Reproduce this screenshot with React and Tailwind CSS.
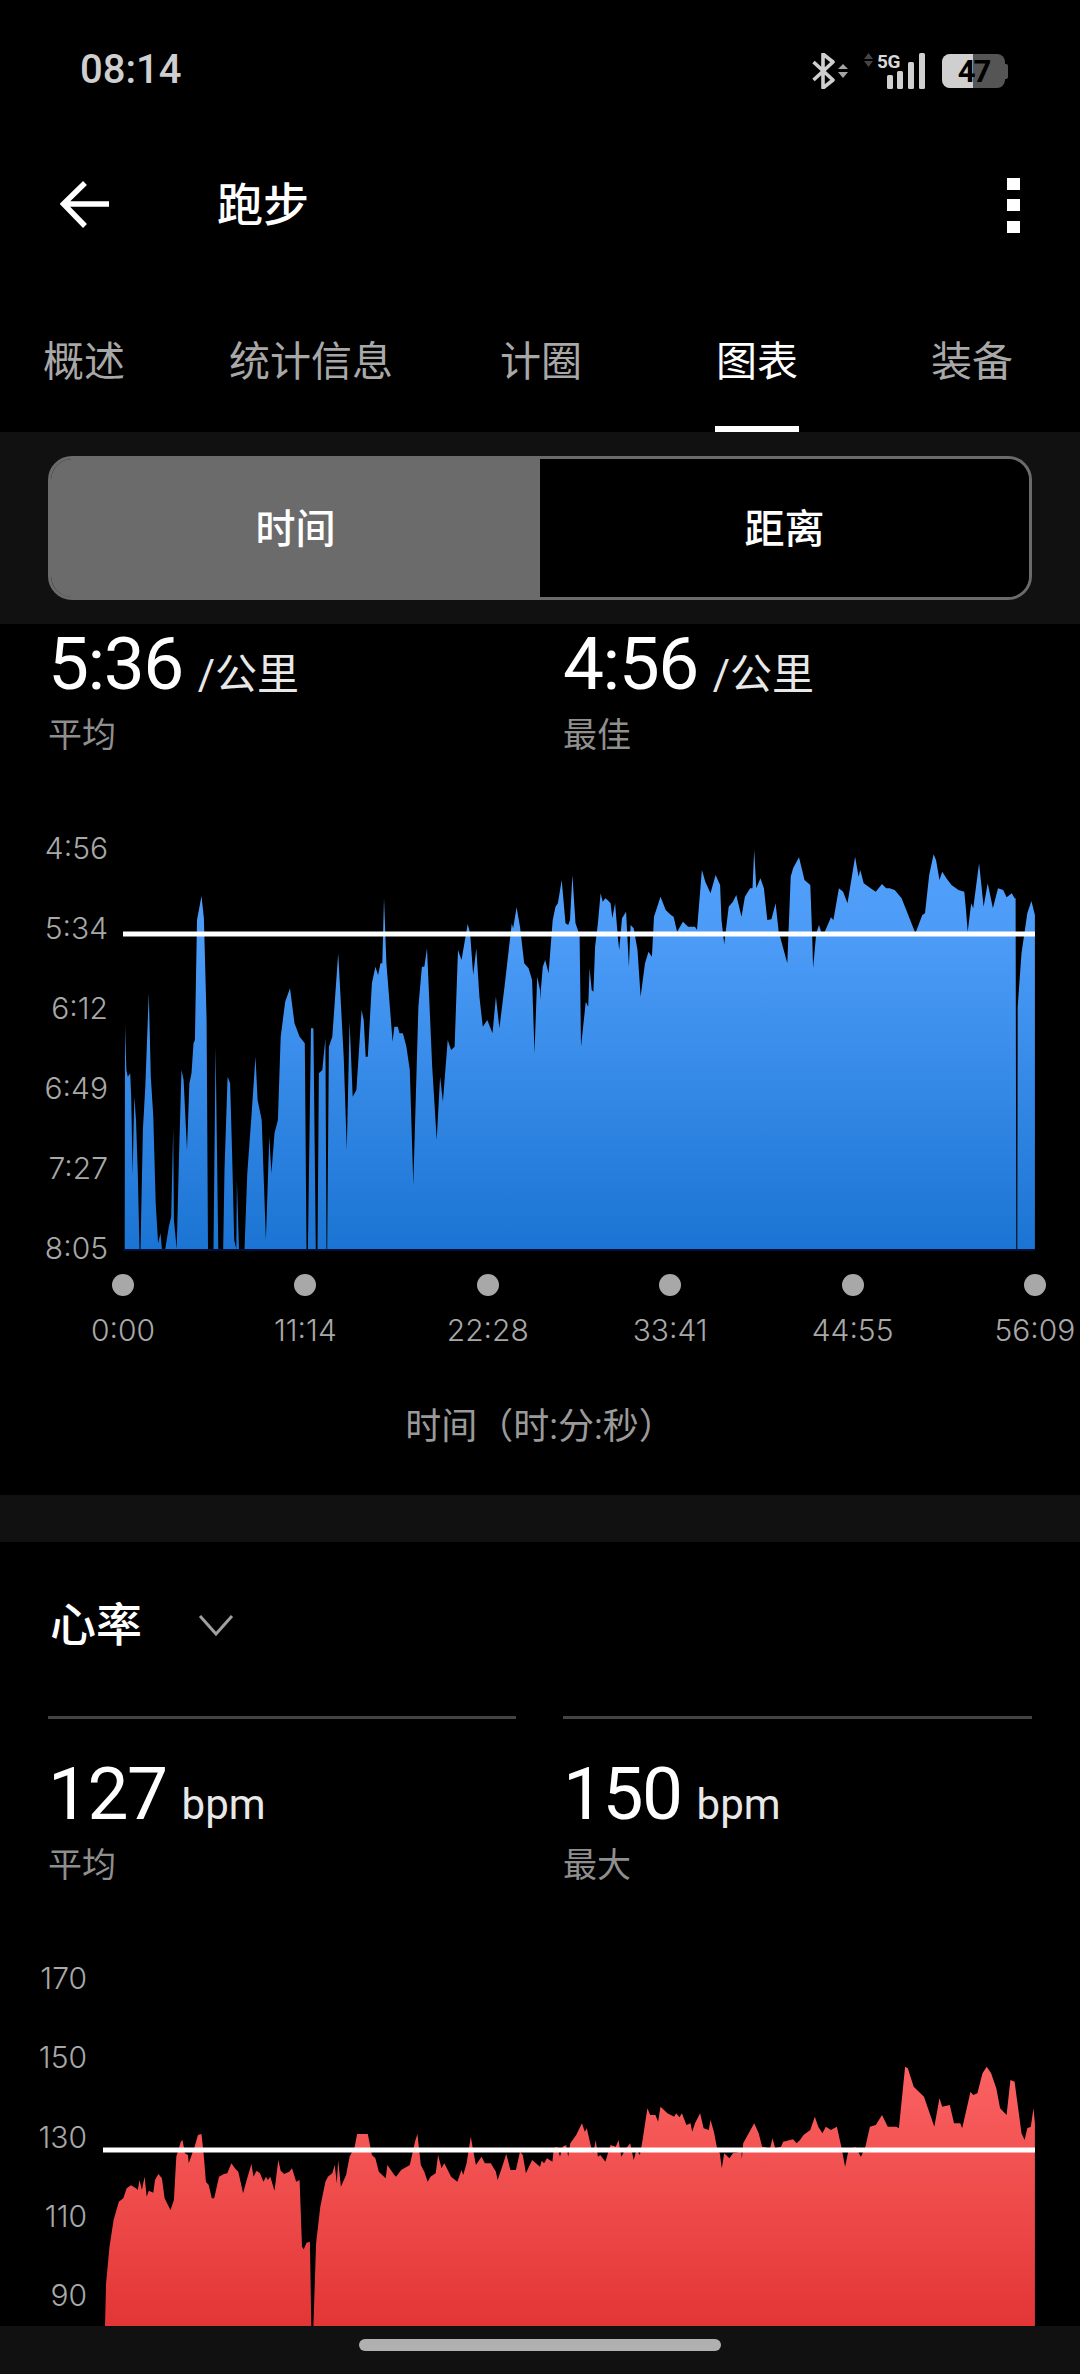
import React from "react";

// Pace trace samples, x/y in the chart's sampling grid; converted to page units below.
const paceLeft = [[362,1287],[363,615],[367,750],[371,770],[378,760],[381,830],[385,1065],[390,830],[395,900],[400,1060],[405,1287],[408,1287],[415,930],[422,800],[432,520],[438,770],[445,890],[452,1150],[459,1270],[466,1240],[470,1287],[480,1287],[490,1220],[497,1190],[503,925],[505,1200],[513,1287],[520,1000],[527,750],[533,780],[543,990],[550,790],[556,760],[562,670],[566,660],[572,300],[585,228],[592,295],[600,600],[604,1287],[620,1287],[626,680],[634,1287],[648,1287],[652,1050],[661,770],[668,790],[674,1000],[680,1260],[686,1287],[688,1080],[694,1287],[710,1287],[718,1060],[730,890],[742,710],[748,840],[760,900],[772,1260],[782,950],[788,1060],[797,940],[807,900],[815,650],[828,545],[842,505],[855,610],[870,650],[885,670],[890,1287],[894,1287],[903,625],[910,625],[917,1287],[922,1287],[926,760],[936,750],[945,655],[948,1287],[950,1287],[955,680],[965,650],[982,400],[998,710],[1007,990],[1015,605],[1024,830],[1035,810],[1050,570],[1056,600],[1062,710],[1068,710],[1080,490],[1090,440],[1098,465],[1105,430],[1110,430],[1115,235],[1122,430],[1135,600],[1140,665],[1145,620],[1155,620],[1160,640],[1170,640],[1180,680],[1190,750],[1200,1095],[1215,560],[1225,440],[1232,440],[1240,385],[1255,740],[1268,960],[1278,770],[1286,845],[1300,660],[1310,690],[1320,680],[1330,390],[1340,420],[1358,312],[1365,340],[1374,465],[1383,385],[1392,530],[1402,620],[1415,600],[1430,640],[1440,530],[1450,625],[1465,500],[1486,310],[1490,325],[1500,262],[1510,320],[1522,430],[1535,445],[1545,480],[1552,700],[1560,470],[1568,510]];
const paceRight = [[0,540],[8,440],[15,420],[25,460],[37,300],[45,260],[52,250],[63,180],[74,310],[82,315],[87,300],[94,165],[103,310],[115,345],[119,680],[133,545],[140,560],[144,445],[150,510],[155,515],[160,380],[168,310],[176,220],[182,245],[190,235],[196,240],[205,250],[210,295],[218,250],[226,350],[230,390],[238,295],[250,275],[258,440],[263,315],[272,325],[283,390],[292,530],[305,430],[315,395],[325,410],[331,290],[350,230],[365,270],[380,285],[388,290],[398,335],[415,305],[430,320],[450,320],[456,330],[470,150],[480,185],[495,220],[510,165],[523,195],[527,300],[535,372],[548,260],[560,245],[570,225],[585,290],[595,230],[610,205],[617,205],[622,90],[628,205],[640,175],[650,205],[660,300],[672,298],[684,250],[693,335],[718,430],[728,170],[735,145],[752,112],[768,180],[785,195],[790,340],[793,445],[802,340],[810,315],[818,340],[825,340],[833,320],[845,292],[852,300],[868,205],[880,215],[893,250],[915,110],[925,170],[930,150],[940,190],[960,205],[975,215],[993,192],[1005,205],[1015,205],[1030,210],[1050,235],[1075,300],[1090,340],[1110,285],[1118,280],[1130,165],[1143,103],[1150,120],[1160,180],[1168,155],[1180,175],[1195,195],[1215,210],[1232,215],[1237,270],[1242,335],[1252,250],[1258,265],[1275,130],[1288,260],[1300,190],[1315,265],[1330,205],[1345,210],[1355,232],[1370,220],[1378,235],[1381,235],[1383,1287],[1386,1287],[1387,560],[1398,400],[1415,280],[1427,243],[1437,285],[1437,1287]];

// Heart-rate trace samples, same grid.
const hrLeft = [[305,978],[308,850],[318,740],[330,660],[345,605],[358,595],[368,565],[380,556],[395,565],[400,570],[405,540],[412,570],[420,530],[426,590],[432,572],[445,578],[450,540],[460,522],[470,535],[478,595],[495,630],[505,600],[512,470],[525,425],[530,420],[537,460],[546,465],[548,490],[565,440],[575,405],[585,402],[592,470],[598,545],[606,555],[615,595],[622,595],[636,530],[650,522],[660,520],[672,490],[682,505],[692,515],[706,580],[715,545],[730,492],[736,530],[745,512],[755,520],[765,545],[772,530],[778,540],[785,530],[797,572],[808,480],[815,512],[825,522],[840,515],[848,505],[860,545],[870,540],[877,740],[882,748],[890,728],[900,725],[904,978],[910,978],[918,730],[930,620],[945,545],[952,530],[965,520],[972,495],[978,550],[982,480],[990,560],[1005,525],[1015,470],[1030,440],[1037,402],[1068,402],[1080,465],[1090,475],[1100,515],[1120,535],[1125,495],[1145,525],[1150,530],[1165,510],[1190,495],[1205,425],[1212,402],[1222,495],[1232,515],[1242,545],[1250,530],[1265,520],[1272,465],[1282,505],[1290,490],[1310,530],[1328,545],[1340,510],[1345,525],[1355,490],[1367,410],[1372,440],[1382,495],[1398,470],[1408,490],[1425,490],[1440,515],[1445,540],[1455,510],[1470,462],[1482,510],[1498,510],[1510,455],[1518,465],[1527,520],[1545,480],[1568,500]];
const hrRight = [[0,500],[5,482],[12,490],[20,475],[36,485],[40,445],[50,440],[58,470],[66,440],[76,435],[82,470],[88,430],[105,405],[122,370],[130,395],[136,385],[148,440],[155,460],[162,420],[168,470],[175,465],[190,485],[200,450],[205,435],[220,440],[228,420],[236,470],[250,445],[262,430],[272,480],[280,450],[290,465],[298,420],[312,325],[320,345],[335,345],[343,365],[350,320],[370,340],[390,350],[395,340],[405,352],[412,340],[425,375],[437,370],[442,395],[450,370],[465,340],[475,385],[490,390],[495,360],[505,395],[515,450],[522,460],[528,505],[535,460],[550,475],[560,460],[585,455],[586,478],[590,430],[622,370],[635,400],[645,440],[668,445],[675,415],[683,445],[700,440],[706,425],[735,418],[745,430],[755,420],[765,405],[785,390],[798,350],[808,380],[820,400],[830,380],[845,390],[862,380],[875,440],[886,500],[895,455],[915,440],[932,470],[945,440],[958,380],[975,375],[993,345],[1010,380],[1035,380],[1042,385],[1060,200],[1068,205],[1085,260],[1115,290],[1145,380],[1160,295],[1168,320],[1190,315],[1202,370],[1220,370],[1226,385],[1250,275],[1258,285],[1270,280],[1285,220],[1297,200],[1310,220],[1325,265],[1336,325],[1355,345],[1366,240],[1378,245],[1398,400],[1407,420],[1415,385],[1425,380],[1433,325],[1437,370],[1437,978]];

const SX = 540 / 1568;
const toPath = (left, right, yBase) =>
  "M" +
  [
    ...left.map(([x, y]) => [x * SX, yBase + y / 3]),
    ...right.map(([x, y]) => [540 + x * SX, yBase + y / 3]),
  ]
    .map(([x, y]) => `${x.toFixed(1)} ${y.toFixed(1)}`)
    .join("L") +
  "Z";

const TABS = [
  { label: "概述", cls: "ml-[43px]" },
  { label: "统计信息", cls: "ml-[104px]" },
  { label: "计圈", cls: "ml-[107px]" },
  { label: "图表", cls: "ml-[134px]", active: true },
  { label: "装备", cls: "ml-[133px]" },
];

const PACE_LABELS = ["4:56", "5:34", "6:12", "6:49", "7:27", "8:05"];
const HR_LABELS = ["170", "150", "130", "110", "90"];
const TICKS = ["0:00", "11:14", "22:28", "33:41", "44:55", "56:09"];

function StatusBar() {
  return (
    <div className="flex h-[140px] items-center pl-[80px] pr-[72px]">
      <span className="text-[40px] font-medium text-[#cfcfcf]">08:14</span>
      <div className="ml-auto mt-[2px] flex items-center">
        {/* Bluetooth rune with transfer arrows */}
        <svg width="38" height="36" viewBox="0 0 38 36" className="block">
          <path d="M1.5 9L21 27L11 35V1L21 9L1.5 27" fill="none" stroke="#cfcfcf" strokeWidth="3.6" strokeLinejoin="round" />
          <path d="M31 11L36 16H26ZM26 19H36L31 25Z" fill="#a5a5a5" />
        </svg>
        {/* Cellular bars with the 5G marker */}
        <svg width="61" height="36" viewBox="0 0 61 36" className="ml-[14px] block overflow-visible">
          <path d="M4.5 0L9 6H0ZM0 8H9L4.5 14Z" fill="#444" />
          <text x="13" y="15" fontSize="19" fontWeight="700" fill="#d8d8d8" fontFamily="Roboto, sans-serif" letterSpacing="-0.5">5G</text>
          <rect x="23" y="22" width="6" height="14" rx="1.5" fill="#d0d0d0" />
          <rect x="33" y="18" width="6" height="18" rx="1.5" fill="#d0d0d0" />
          <rect x="44" y="9" width="6" height="27" rx="1.5" fill="#d0d0d0" />
          <rect x="55" y="0" width="6" height="36" rx="1.5" fill="#d0d0d0" />
        </svg>
        <div className="relative ml-[17px] h-[34px] w-[63px] overflow-hidden rounded-[8px] bg-[#555555]">
          <div className="absolute inset-y-0 left-0 w-[31px] bg-[#cfcfcf]" />
          <span className="absolute inset-0 flex items-center justify-center text-[31px] font-bold leading-none tracking-[-2px] text-black">47</span>
        </div>
        <div className="h-[15px] w-[3px] rounded-r-[2px] bg-[#555555]" />
      </div>
    </div>
  );
}

function Header() {
  return (
    <div className="flex h-[130px] items-center pl-[60px] pr-[60px]">
      <svg width="50" height="48" viewBox="0 0 50 48" className="block">
        <path d="M49 23H4M25 2L3.5 23L25 45" fill="none" stroke="#fff" strokeWidth="5.5" />
      </svg>
      <span className="ml-[107px] text-[46px] font-medium leading-none text-white">跑步</span>
      <div className="ml-auto flex flex-col gap-[9.5px]">
        <div className="h-[12px] w-[13px] bg-white" />
        <div className="h-[12px] w-[13px] bg-white" />
        <div className="h-[12px] w-[13px] bg-white" />
      </div>
    </div>
  );
}

function Tabs() {
  return (
    <div className="flex h-[162px]">
      {TABS.map((t) => (
        <div key={t.label} className={`flex h-full flex-col pt-[68px] ${t.cls}`}>
          <span className={`text-[41px] leading-[48px] ${t.active ? "text-white" : "text-[#a8a8a8]"}`}>{t.label}</span>
          {t.active && <div className="-mx-[1px] mt-auto h-[6px] bg-white" />}
        </div>
      ))}
    </div>
  );
}

function Segmented() {
  return (
    <div className="bg-[#111111] px-[48px] py-[24px]">
      <div className="flex h-[144px] w-[984px] overflow-hidden rounded-[24px] border-[3px] border-[#6b6b6b]">
        <div className="flex flex-1 items-center justify-center bg-[#6b6b6b] pt-[3px] text-[40px] font-medium text-white">时间</div>
        <div className="flex flex-1 items-center justify-center bg-black pt-[3px] text-[40px] font-medium text-white">距离</div>
      </div>
    </div>
  );
}

function Stat({ value, unit, label, cls }) {
  return (
    <div className={cls}>
      <div className="flex h-[72px] items-baseline">
        <span className="text-[73px] leading-[72px] tracking-[-1.5px] text-white">{value}</span>
        <span className="ml-[15px] text-[42px] leading-[40px] text-[#e8e8e8]">{unit}</span>
      </div>
      <div className="mt-[11px] text-[34px] leading-[48px] text-[#8f8f8f]">{label}</div>
    </div>
  );
}

function StatRow({ cls, stats }) {
  return (
    <div className={`flex ${cls}`}>
      <Stat {...stats[0]} cls="w-[563px] pl-[48px]" />
      <Stat {...stats[1]} />
    </div>
  );
}

function YAxis({ labels, cls }) {
  return (
    <div className={`flex flex-none flex-col justify-between text-right font-[family-name:Inter,sans-serif] text-[30px] font-light leading-[40px] text-[#a8a8a8] ${cls}`}>
      {labels.map((l) => (
        <span key={l}>{l}</span>
      ))}
    </div>
  );
}

function PaceChart() {
  return (
    <div className="mt-[69px] flex items-start">
      <YAxis labels={PACE_LABELS} cls="h-[440px] w-[108px]" />
      <svg width="912" height="440" viewBox="123 828 912 440" className="ml-[15px] block flex-none">
        <defs>
          <linearGradient id="paceFill" gradientUnits="userSpaceOnUse" x1="0" y1="850" x2="0" y2="1249">
            <stop offset="0" stopColor="#51a0fc" />
            <stop offset="0.25" stopColor="#4a9af6" />
            <stop offset="1" stopColor="#1b74d3" />
          </linearGradient>
        </defs>
        <path d={toPath(paceLeft, paceRight, 820)} fill="url(#paceFill)" />
        <rect x="123" y="1249" width="912" height="2" fill="#00103a" />
        <rect x="123" y="931.5" width="912" height="5" fill="#fff" />
      </svg>
    </div>
  );
}

function TimeAxis() {
  return (
    <div className="ml-[73px] mt-[6px] flex w-[1012px] justify-between">
      {TICKS.map((t) => (
        <div key={t} className="flex w-[100px] flex-col items-center">
          <div className="h-[22px] w-[22px] rounded-full bg-[#a8a8a8]" />
          <span className="mt-[14px] font-[family-name:Inter,sans-serif] text-[30px] font-light leading-[40px] text-[#a8a8a8]">{t}</span>
        </div>
      ))}
    </div>
  );
}

function HeartChart() {
  return (
    <div className="mt-[71px] flex items-start">
      <YAxis labels={HR_LABELS} cls="-mt-[2px] h-[357px] w-[87px]" />
      <svg width="932" height="366" viewBox="103 1960 932 366" className="ml-[16px] block flex-none">
        <defs>
          <linearGradient id="hrFill" gradientUnits="userSpaceOnUse" x1="0" y1="2067" x2="0" y2="2326">
            <stop offset="0" stopColor="#fb6262" />
            <stop offset="1" stopColor="#e33535" />
          </linearGradient>
        </defs>
        <path d={toPath(hrLeft, hrRight, 2000)} fill="url(#hrFill)" />
        <rect x="103" y="2147.5" width="932" height="5" fill="#fff" />
      </svg>
    </div>
  );
}

export default function App() {
  return (
    <div className="h-[2374px] w-[1080px] overflow-hidden bg-black font-[family-name:Roboto,'Noto_Sans_CJK_SC',sans-serif]">
      <StatusBar />
      <Header />
      <Tabs />
      <Segmented />

      <StatRow
        cls="mt-[4px]"
        stats={[
          { value: "5:36", unit: "/公里", label: "平均" },
          { value: "4:56", unit: "/公里", label: "最佳" },
        ]}
      />
      <PaceChart />
      <TimeAxis />
      <div className="mt-[53px] text-center text-[36px] leading-[48px] text-[#9a9a9a]">时间（时:分:秒）</div>

      <div className="mt-[44px] h-[47px] bg-[#111111]" />

      <div className="mt-[53px] flex h-[60px] items-center pl-[50px]">
        <span className="text-[46px] font-medium leading-none text-white">心率</span>
        <svg width="36" height="22" viewBox="0 0 36 22" className="ml-[56px] block">
          <path d="M2 2L18 20L34 2" fill="none" stroke="#a0a0a0" strokeWidth="3" />
        </svg>
      </div>

      <div className="mt-[61px] flex pl-[48px]">
        <div className="h-[3px] w-[468px] bg-[#444444]" />
        <div className="ml-[47px] h-[3px] w-[469px] bg-[#444444]" />
      </div>

      <StatRow
        cls="mt-[39px]"
        stats={[
          { value: "127", unit: "bpm", label: "平均" },
          { value: "150", unit: "bpm", label: "最大" },
        ]}
      />
      <HeartChart />

      {/* Gesture bar */}
      <div className="flex h-[48px] justify-center bg-[#111111] pt-[13px]">
        <div className="h-[12px] w-[362px] rounded-full bg-[#b0b0b0]" />
      </div>
    </div>
  );
}
